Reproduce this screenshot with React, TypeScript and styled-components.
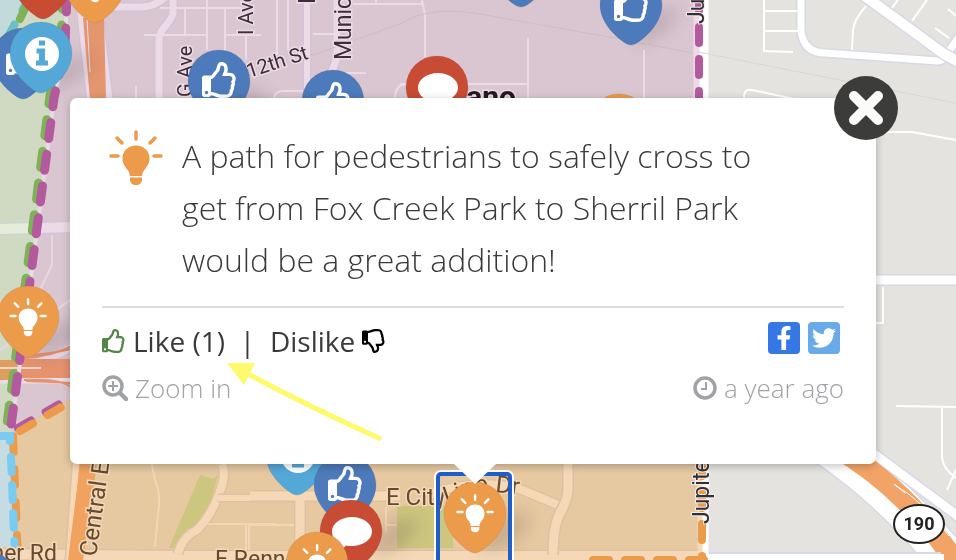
import React from "react";
import styled, { createGlobalStyle } from "styled-components";
import { FaRegThumbsUp, FaRegThumbsDown, FaFacebookF, FaTwitter } from "react-icons/fa";

const GlobalStyle = createGlobalStyle`
  * { box-sizing: border-box; }
  body { margin: 0; background: #e4e3df; }
`;

const Stage = styled.main`
  position: relative;
  min-height: 100vh;
  padding: 98px 80px 96px 70px;
  overflow: hidden;
  font-family: "Open Sans", "Noto Sans", sans-serif;
`;

const MapCanvas = styled.svg`
  position: absolute;
  inset: 0;
  width: 100%;
  height: 100%;
  font-family: Roboto, sans-serif;
  font-size: 23px;
`;

const Pin = styled.button<{ $x: number; $y: number }>`
  position: absolute;
  left: ${(p) => p.$x}px;
  top: ${(p) => p.$y}px;
  width: 62px;
  height: 72px;
  padding: 0;
  border: 0;
  background: none;
  cursor: pointer;
  svg { display: block; overflow: visible; }
`;

const Selection = styled.div`
  position: absolute;
  left: 434px;
  top: 470px;
  width: 80px;
  height: 110px;
  border: 2px solid #fff;
  border-radius: 7px;
  &::before {
    content: "";
    display: block;
    height: 100%;
    border: 4px solid #205fca;
    border-radius: 5px;
  }
`;

const Card = styled.article`
  position: relative;
  padding: 32px 32px 52px;
  background: #fff;
  border-radius: 7px;
  box-shadow: 0 2px 8px rgba(0, 0, 0, 0.25);
  color: #3a3a3b;
`;

const Tail = styled.span`
  position: absolute;
  top: 100%;
  left: 384px;
  border: 21px solid transparent;
  border-top: 20px solid #fff;
  border-bottom: 0;
`;

const Close = styled.button`
  position: absolute;
  top: -22px;
  right: -22px;
  width: 64px;
  height: 64px;
  padding: 0;
  border: 0;
  border-radius: 50%;
  background: #3c3c3b;
  cursor: pointer;
  svg { display: block; }
`;

const Message = styled.div`
  display: flex;
  gap: 18px;
  padding: 0 48px 20px 6px;
  border-bottom: 2px solid #dcdcdc;
`;

const IdeaIcon = styled.svg`
  flex: none;
  width: 56px;
  height: 56px;
  color: #ec9b4a;
`;

const Comment = styled.p`
  margin: 0;
  font-size: 32px;
  font-weight: 300;
  line-height: 52px;
`;

const Row = styled.div`
  display: flex;
  justify-content: space-between;
  align-items: flex-start;
`;

const VoteRow = styled(Row)`
  padding-top: 10px;
`;

const Group = styled.div`
  display: flex;
  align-items: center;
`;

const Vote = styled.button`
  display: flex;
  align-items: center;
  gap: 7px;
  height: 46px;
  padding: 0;
  border: 0;
  background: none;
  color: inherit;
  font: 400 28px/46px "Open Sans", sans-serif;
  cursor: pointer;
`;

const LikeGlyph = styled(FaRegThumbsUp)`
  width: 24px;
  height: 26px;
  color: #538649;
`;

const DislikeGlyph = styled(FaRegThumbsDown)`
  width: 24px;
  height: 26px;
  color: #000;
`;

const Separator = styled.span`
  width: 45px;
  text-align: center;
  font-size: 28px;
  line-height: 46px;
`;

const Socials = styled.div`
  display: flex;
  gap: 8px;
  padding: 4px 4px 0 0;
`;

const Social = styled.a<{ $color: string }>`
  display: flex;
  align-items: center;
  justify-content: center;
  width: 32px;
  height: 32px;
  border-radius: 4px;
  background: ${(p) => p.$color};
  color: #fff;
  font-size: 24px;
`;

const Meta = styled.span`
  display: flex;
  align-items: center;
  gap: 7px;
  color: #a0a2a5;
  font-size: 26px;
  font-weight: 300;
  line-height: 48px;
  text-decoration: none;
`;

const Arrow = styled.svg`
  position: absolute;
  left: 156px;
  top: 264px;
  pointer-events: none;
`;

type Kind = "like" | "info" | "idea" | "comment";

const pinColor: Record<Kind, string> = {
  like: "#4d7aba",
  info: "#54a8d8",
  idea: "#ec9b4a",
  comment: "#c84b34",
};

const Bulb = () => (
  <g fill="currentColor">
    <path d="M28 28c-8 0-13.500 5.500-13.500 13 0 5.500 3 8.500 5.500 12 1.200 1.800 1.700 3.300 1.900 5.500h12.200c.2-2.200.7-3.700 1.900-5.500 2.500-3.500 5.500-6.500 5.500-12 0-7.500-5.500-13-13.500-13z" />
    <path d="M22 60h12v2c0 3.500-2.500 5.500-6 5.500s-6-2-6-5.500z" />
    <g stroke="currentColor" strokeWidth="3.500" strokeLinecap="round">
      <path d="M28 14.500v7M9 20.500l5 5M47 20.500l-5 5M3 38.500h7M46 38.500h7" />
    </g>
  </g>
);

const PinGlyph = ({ kind }: { kind: Kind }) => {
  if (kind === "like") return <FaRegThumbsUp x="14" y="12" size={36} color="#fff" />;
  if (kind === "info")
    return (
      <g>
        <circle cx="32" cy="32" r="17" fill="#fff" />
        <path
          fill={pinColor.info}
          d="M29 18.500h6v5h-6zM26.500 26.500H35v12h3v5H26v-5h3v-7h-2.500z"
        />
      </g>
    );
  if (kind === "comment")
    return (
      <path
        fill="#fff"
        d="M32 17c11 0 20 6.500 20 14.500S43 46 32 46c-2.500 0-4 0-6-.5-2 2.500-5 4.500-9 5 2-2 3-4.500 3-7-5-2.500-8-7-8-12C12 23.500 21 17 32 17z"
      />
    );
  return (
    <g color="#fff" transform="translate(11.500 3) scale(.7)">
      <Bulb />
    </g>
  );
};

const pins: { kind: Kind; x: number; y: number; label: string }[] = [
  { kind: "comment", x: 12, y: -52, label: "Comment on the west trail" },
  { kind: "idea", x: 64, y: -48, label: "Idea on Central Expressway" },
  { kind: "like", x: -8, y: 28, label: "Liked place on the west trail" },
  { kind: "info", x: 10, y: 22, label: "Trail information" },
  { kind: "like", x: 188, y: 50, label: "Liked place on 12th St" },
  { kind: "like", x: 302, y: 70, label: "Liked place on Municipal" },
  { kind: "comment", x: 406, y: 56, label: "Comment in Plano" },
  { kind: "like", x: 490, y: -64, label: "Liked place to the north" },
  { kind: "like", x: 600, y: -26, label: "Liked place near Jupiter" },
  { kind: "idea", x: 588, y: 94, label: "Idea in Plano" },
  { kind: "idea", x: -3, y: 286, label: "Idea on the boundary" },
  { kind: "info", x: 266, y: 424, label: "Station information" },
  { kind: "like", x: 314, y: 454, label: "Liked place on CityLine" },
  { kind: "comment", x: 320, y: 500, label: "Comment near Renner" },
  { kind: "idea", x: 286, y: 532, label: "Idea near Renner" },
  { kind: "like", x: -43, y: 552, label: "Liked place on Renner Rd" },
  { kind: "idea", x: 444, y: 482, label: "Selected idea" },
];

const MapPin = ({ kind, x, y, label }: (typeof pins)[number]) => (
  <Pin $x={x} $y={y} aria-label={label}>
    <svg width="62" height="72" viewBox="0 0 62 72">
      <path
        fill={pinColor[kind]}
        stroke="#555"
        strokeOpacity=".25"
        strokeWidth=".5"
        d="M31 0a31 31 0 0 1 31 31c0 16-13 30-25 38q-6 4-12 0C13 61 0 47 0 31A31 31 0 0 1 31 0z"
      />
      <PinGlyph kind={kind} />
    </svg>
  </Pin>
);

type RoadProps = { d: string; width: number; fill: string; edge: string };

const Road = ({ d, width, fill, edge }: RoadProps) => (
  <g fill="none" strokeLinejoin="round">
    <path d={d} stroke={edge} strokeWidth={width + 3} />
    <path d={d} stroke={fill} strokeWidth={width} />
  </g>
);

const pink = { fill: "#ecdae7", edge: "#d2c3d9" };
const grey = { fill: "#ffffff", edge: "#d7d9e6" };
const tan = { fill: "#f5d9b6", edge: "#dfc0a5" };

const StreetMap = () => (
  <MapCanvas aria-hidden="true">
    <defs>
      <filter id="soft" x="-50%" y="-50%" width="200%" height="200%">
        <feGaussianBlur stdDeviation="9" />
      </filter>
      <path id="cityline" d="M386 505H440C458 503 474 489 496 492L540 497" />
    </defs>

    <path fill="#dac6d0" d="M0 0h700v470H0z" />
    <path fill="#d0dac2" d="M0 0h66L54 100 12 432H0z" />
    <path fill="#c2dad9" d="M0 0h28L0 54z" />
    <path fill="#e6c8a1" d="M12 432 72 398H702V560H12z" />
    <path fill="#c5dce2" d="M0 434h12l5 126H0z" />

    <Road d="M106 7h36q14 0 28-14" width={7} {...pink} />
    <Road d="M89 0 C92 40 96 65 100 100" width={25} {...pink} />
    <path fill="#e4966f" d="M83 18h21l2 82H90z" />
    <path d="m87 18 3 54" stroke="#ecdae7" fill="none" />
    <Road d="M173-4V13q0 4-10 16-4 5-4 10V100" width={7} {...pink} />
    <Road d="M307 0V100" width={6} {...pink} />
    <Road d="M337 0v58l-7 18" width={7} {...pink} />
    <g fill="none" stroke="#ecdbe6" strokeWidth="2">
      <path d="M160 8h82M144 35h63M207 0v50M185 8v28M225 8v45M225 35h36M246 36v24M277 0v55M288 0v50M313 34h23M353 4h69V0l3 15v42M376 0v5M336 73h30M136 86v14M274 100q0-9 9-9h20M400 84h128M528 38v61M644 50v50M395 99q0-15 12-15" />
    </g>
    <path fill="none" stroke="#cdbdc1" d="M310 56 400 24 Q430 5 480 14 L620 39 692 53" />
    <path d="M697 0V100" stroke="#ecdae7" strokeWidth="7" />
    <path d="M704 0V100" stroke="#fff" strokeWidth="9" />

    <Road d="M0 229 72 227" width={10} fill="#e5edda" edge="#cfd3d1" />
    <Road d="M39 228 72 227" width={10} {...pink} />
    <path d="M52 235v30l-12 25M70 300 0 350" fill="none" stroke="#e6d7de" strokeWidth="2" />
    <path d="M0 371Q40 365 72 347M0 369H72M0 380H72Q64 382 50 379" fill="none" stroke="#ecdae7" strokeWidth="7" />
    <path fill="#de9e5e" d="M0 360H18v20H0z" />
    <path fill="#e5926e" d="M18 359h54v19H18z" />
    <path d="M0 368h41" stroke="#ecd5cf" strokeWidth="2" />
    <path d="M24 358q28-2 48-12M24 355q20 0 48-6M24 380q38-2 48 8M26 381q30 1 46 2" fill="none" stroke="#e5926e" strokeWidth="2" />

    <Road d="M0 554 170 556H704" width={10} {...tan} />
    <Road d="M76 464 69 560" width={6} {...tan} />
    <path fill="#f0a25e" d="M80 464h17l-14 96H68z" />
    <path d="M152 464q1 10 5 22t1 28l-3 33" fill="none" stroke="#f3d7b5" strokeWidth="2" />
    <path fill="#cdc67e" d="m200 475 13 4 5-4-8 30-32 43h-9z" />
    <Road d="M222 464q5 10-3 30-8 22-22 36-15 7-19 24" width={8} {...tan} />
    <Road d="M218 498H300" width={6} {...tan} />
    <path d="M207 524h70M246 525v25M249 525v25M250 525h44M386 507v25M386 525h12" stroke="#f3d7b5" strokeWidth="2" />
    <Road d="M300 492v68M250 496h150" width={9} {...tan} />
    <path fill="#cdc67e" d="M397 506h56v42h-56z" />
    <Road d="M430 494Q470 479 515 487 L558 505" width={8} {...tan} />
    <Road d="M568 460v29q0 10-8 24-7 14-7 42" width={9} {...tan} />
    <path d="M572 468q6-5 18-4h107" fill="none" stroke="#dfc0a5" strokeWidth="2" />
    <path fill="#e4e3df" d="M709 0H3000V560H709z" />
    <path d="M704 460V560" stroke="#fff" strokeWidth="9" />
    <path d="M700 460V552" stroke="#f5d9b6" strokeWidth="5" />

    <Road d="M801-2V31q3 22 24 22l113 8q4 0 7-4l15-22" width={7} {...grey} />
    <Road d="M862-6 944 54 970 68" width={10} {...grey} />
    <g fill="none" stroke="#fff" strokeWidth="2">
      <path d="M764 0v51l29 1M764 11h33M764 31h34M866 6q-13 15-13 25l-1 19M898 0l-6 8M927 0l-15 21M948 9l8 7M935 28l14 10M744 98q0-10 8-8l42 9M876 132h36l44 8" />
      <path d="M876 323h7v-36M896 406l60 1M942 406v50q0 12 14 22M956 470l-9 20" />
    </g>
    <path d="M698 52 956 103" stroke="#d8d8cc" />
    <Road d="M870 280 3000 282" width={9} {...grey} />
    <Road d="M826 445 Q905 500 960 575" width={39} {...grey} />
    <Road d="M866 448 L970 525" width={9} {...grey} />
    <path d="M835 447 Q912 491 966 578" fill="none" stroke="#f2a468" strokeWidth="21" />
    <path d="M895 485 q28 16 54 51M894 484l11 9" fill="none" stroke="#fff" />
    <path d="M709 553h232" stroke="#d7d9e6" strokeWidth="2" />
    <path d="M704 557H944" stroke="#fff" strokeWidth="6" />

    <g filter="url(#soft)" fill="#4a3a40" opacity=".22">
      <ellipse cx="70" cy="72" rx="26" ry="9" transform="rotate(-35 70 72)" />
      <ellipse cx="655" cy="25" rx="26" ry="9" transform="rotate(-35 655 25)" />
      <ellipse cx="58" cy="338" rx="26" ry="10" transform="rotate(-35 58 338)" />
      <ellipse cx="504" cy="532" rx="28" ry="11" transform="rotate(-35 504 532)" />
      <ellipse cx="394" cy="536" rx="26" ry="11" transform="rotate(-35 394 536)" />
      <ellipse cx="240" cy="98" rx="30" ry="8" />
    </g>

    <g fill="none" strokeWidth="8" strokeLinecap="round">
      <path d="M28 0 0 51" stroke="#6cc0c5" strokeDasharray="16 17" strokeDashoffset="5" />
      <path d="M27 4 20 19" stroke="#7fb156" />
      <path d="M67-4 65 45 54 98 12 425" stroke="#e5dde1" strokeWidth="4" />
      <g strokeWidth="9" strokeDasharray="16 16">
        <path d="M63-8 61 42 50 96 7 424" stroke="#7fb156" strokeDashoffset="-1" />
        <path d="M67-5 65 45 54 98 11 426" stroke="#b35a9e" strokeDashoffset="-1" />
      </g>
      <path d="M18 428 68 399" stroke="#b35a9e" strokeDasharray="15 17" />
      <path d="M20 431 70 402" stroke="#ec9b4a" strokeDasharray="15 17" />
      <path d="M13 436 18 560" stroke="#ec9b4a" strokeDasharray="16 17" />
      <path d="M0 436h10v7M11 457l4 100" stroke="#79cbf2" strokeDasharray="15 13" />
      <path d="M699-5V100" stroke="#b35a9e" strokeDasharray="16 16" />
      <path d="M702 460V560" stroke="#ec9b4a" strokeDasharray="16 16" />
      <path d="M593 560H704" stroke="#ec9b4a" strokeDasharray="16 16" />
    </g>

    <g fill="#3f2b3b" stroke="#eadbe4" strokeWidth="3" paintOrder="stroke">
      <text transform="translate(192 97) rotate(-90)" fontSize="20">G Ave</text>
      <text transform="translate(253 35) rotate(-90)" fontSize="20">I Ave</text>
      <text transform="translate(351 60) rotate(-90)">Municipal</text>
      <text transform="translate(315 4) rotate(-90)">K Ave</text>
      <text transform="translate(249 78) rotate(-18)" fontSize="20">12th St</text>
      <text x="516" y="107" textAnchor="end" fontSize="30" fontWeight="700" fill="#261722">Plano</text>
    </g>
    <g fill="#303030" stroke="#f4ecef" strokeWidth="2" paintOrder="stroke">
      <text transform="translate(704 24) rotate(-90)">Jupiter</text>
      <text transform="translate(709 524) rotate(-90)">Jupiter</text>
    </g>
    <g fill="#66492f" stroke="#f3d9b8" strokeWidth="3" paintOrder="stroke">
      <text transform="translate(96 557) rotate(-82)" fontSize="24">Central Expy</text>
      <text x="57" y="561" textAnchor="end">Renner Rd</text>
      <text x="215" y="567">E Renner Rd</text>
      <text fontSize="24"><textPath href="#cityline">E CityLine Dr</textPath></text>
    </g>
    <ellipse cx="919" cy="524" rx="25" ry="19" fill="#fff" stroke="#222" strokeWidth="2" />
    <text x="919" y="530" textAnchor="middle" fontSize="18" fontWeight="700" fill="#222">190</text>
  </MapCanvas>
);

export default function App() {
  return (
    <Stage>
      <GlobalStyle />
      <StreetMap />
      <Selection />
      {pins.map((pin) => (
        <MapPin key={pin.label} {...pin} />
      ))}
      <Card>
        <Tail />
        <Message>
          <IdeaIcon viewBox="0 12.500 56 56" aria-hidden="true">
            <Bulb />
          </IdeaIcon>
          <Comment>
            A path for pedestrians to safely cross to get from Fox Creek Park to Sherril Park would
            be a great addition!
          </Comment>
        </Message>
        <VoteRow>
          <Group>
            <Vote>
              <LikeGlyph />
              Like (1)
            </Vote>
            <Separator>|</Separator>
            <Vote>
              Dislike
              <DislikeGlyph />
            </Vote>
          </Group>
          <Socials>
            <Social href="#facebook" aria-label="Share on Facebook" $color="#3578e5">
              <FaFacebookF />
            </Social>
            <Social href="#twitter" aria-label="Share on Twitter" $color="#69abe8">
              <FaTwitter />
            </Social>
          </Socials>
        </VoteRow>
        <Row>
          <Meta as="a" href="#zoom">
            <svg width="26" height="26" viewBox="0 0 26 26" fill="none" stroke="currentColor">
              <circle cx="11" cy="11" r="9" strokeWidth="3.500" />
              <path d="m18 18 6 6" strokeWidth="4.500" strokeLinecap="round" />
              <path d="M11 6v10M6 11h10" strokeWidth="2" />
            </svg>
            Zoom in
          </Meta>
          <Meta>
            <svg width="24" height="24" viewBox="0 0 24 24" fill="none" stroke="currentColor">
              <circle cx="12" cy="12" r="10" strokeWidth="3.500" />
              <path d="M13 6v7H8" strokeWidth="2" />
            </svg>
            a year ago
          </Meta>
        </Row>
        <Arrow width="160" height="82" viewBox="0 0 160 82" aria-hidden="true">
          <path d="M22 12Q88 47 155 77" fill="none" stroke="#fffa6b" strokeWidth="5" />
          <path d="M1 1h28L18 23z" fill="#fffa6b" />
        </Arrow>
        <Close aria-label="Close">
          <svg width="64" height="64" viewBox="0 0 64 64">
            <path d="M20 20l24 24M44 20 20 44" stroke="#fbfbfa" strokeWidth="10" strokeLinecap="round" />
          </svg>
        </Close>
      </Card>
    </Stage>
  );
}
